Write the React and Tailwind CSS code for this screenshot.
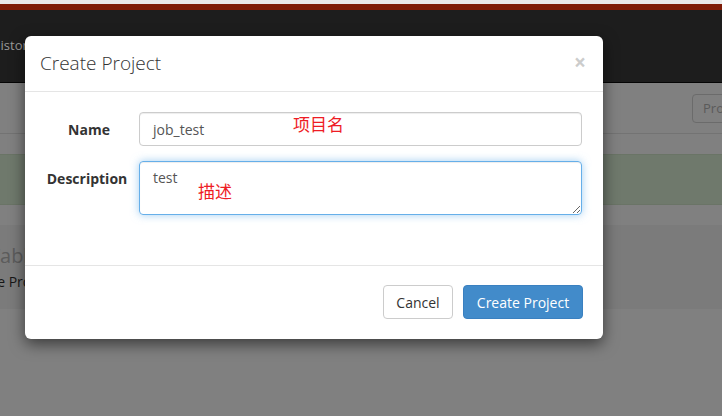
import React from "react";

export default function App() {
  return (
    <div className="relative w-[722px] h-[416px] overflow-hidden bg-[#808080] font-['Open_Sans',sans-serif]">
      {/* background page (already dimmed by the modal backdrop) */}
      <div className="h-[4px] bg-[#e9e9e9]" />
      <div className="h-[6px] bg-[#7e1c07]" />
      <nav className="h-[73px] bg-[#1d1d1d] border-b border-[#050505] flex items-center">
        <span className="-ml-[9px] text-[13px] text-[#9a9a9a] whitespace-nowrap">History</span>
      </nav>
      <div className="h-[51px] bg-[#808080] border-b border-[#737373] flex items-start justify-end pt-[11px]">
        <div className="h-[29px] w-[40px] -mr-[10px] rounded-[4px] border border-[#6b6b6b] text-[13px] text-[#5a5a5a] flex items-center pl-[10px]">
          Projects
        </div>
      </div>
      <div className="h-[20px]" />
      <div className="h-[51px] bg-[#6f796c] border-y border-[#6a7466]" />
      <div className="h-[20px]" />
      <div className="h-[84px] bg-[#7b7b7b] pt-[17px]">
        <div className="-ml-[11px] text-[20px] leading-[28px] text-[#5c5c5c] whitespace-nowrap">Table</div>
        <div className="-ml-[38px] mt-[2px] text-[14px] leading-[20px] text-[#161616] whitespace-nowrap">Create Project</div>
      </div>

      {/* modal */}
      <div className="absolute inset-0">
        <div className="absolute left-[25px] top-[36px] w-[578px] h-[303px] bg-white rounded-[6px] shadow-[0_5px_15px_rgba(0,0,0,0.55)] flex flex-col">
          <div className="h-[56px] border-b border-[#e5e5e5] flex items-center justify-between pl-[15px] pr-[17px]">
            <h4 className="text-[19px] font-light text-[#333] leading-[25px]">Create Project</h4>
            <span className="text-[21px] font-bold leading-none text-[#cccccc] -mt-[3px]">×</span>
          </div>
          <div className="flex-1 pt-[20px] px-[15px] flex flex-col gap-[15px]">
            <div className="flex items-center">
              <label className="w-[98px] text-center text-[14px] font-bold text-[#333]">Name</label>
              <div className="relative ml-[1px] w-[443px]">
                <div className="h-[34px] rounded-[4px] border border-[#cccccc] shadow-[inset_0_1px_1px_rgba(0,0,0,0.075)] flex items-center px-[13px] text-[14px] text-[#555]">
                  job_test
                </div>
                <span className="absolute left-[154px] top-[0px] text-[17px] leading-[24px] text-[#ee1c25] font-['Noto_Sans_CJK_SC',sans-serif]">项目名</span>
              </div>
            </div>
            <div className="flex items-start">
              <label className="w-[94px] pt-[7px] text-center text-[14px] font-bold text-[#333]">Description</label>
              <div className="relative ml-[5px] w-[443px]">
                <textarea
                  defaultValue="test"
                  className="block w-[443px] h-[54px] rounded-[4px] border border-[#66afe9] outline-none shadow-[inset_0_1px_1px_rgba(0,0,0,0.075),0_0_8px_rgba(102,175,233,0.6)] px-[13px] py-[6px] text-[14px] leading-[20px] text-[#555] font-['Open_Sans',sans-serif]"
                />
                <span className="absolute left-[59px] top-[18px] text-[17px] leading-[24px] text-[#ee1c25] font-['Noto_Sans_CJK_SC',sans-serif]">描述</span>
              </div>
            </div>
          </div>
          <div className="h-[74px] border-t border-[#e5e5e5] flex items-start justify-end gap-[10px] pt-[19px] pr-[20px]">
            <button className="h-[34px] w-[70px] rounded-[4px] border border-[#cccccc] bg-white text-[14px] text-[#333]">Cancel</button>
            <button className="h-[34px] w-[120px] rounded-[4px] border border-[#3a80c0] bg-[#428bca] text-[14px] text-white">Create Project</button>
          </div>
        </div>
      </div>
    </div>
  );
}
